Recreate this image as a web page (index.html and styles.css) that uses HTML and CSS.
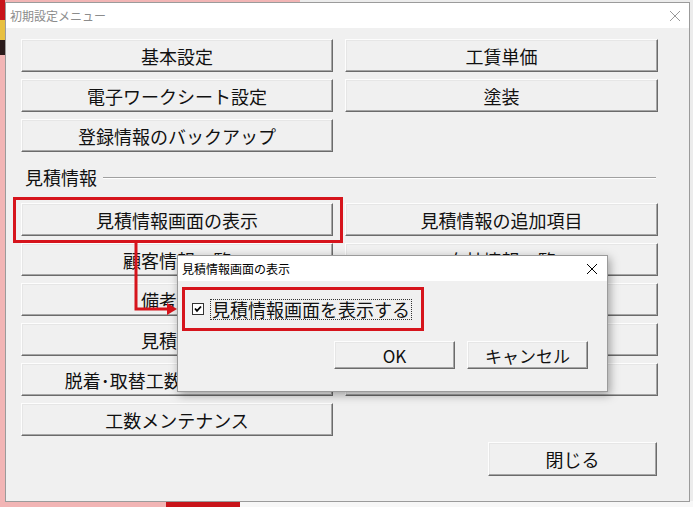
FILE: index.html
```html
<!DOCTYPE html>
<html lang="ja">
<head>
  <meta charset="UTF-8">
  <title>初期設定メニュー</title>
  <link rel="stylesheet" href="styles.css">
</head>
<body>
  <div class="desktop">

    <!-- Main window -->
    <div class="window main-window">
      <div class="titlebar">
        <span class="title">初期設定メニュー</span>
        <svg class="close-x" width="12" height="12" viewBox="0 0 12 12"><path d="M1 1L11 11M11 1L1 11"/></svg>
      </div>
      <div class="window-body">
        <div class="btn-grid">
          <button class="btn">基本設定</button>
          <button class="btn">工賃単価</button>
          <button class="btn">電子ワークシート設定</button>
          <button class="btn">塗装</button>
          <button class="btn">登録情報のバックアップ</button>
        </div>

        <div class="group-label">
          <span>見積情報</span>
          <div class="etched"></div>
        </div>

        <div class="btn-grid">
          <button class="btn">見積情報画面の表示</button>
          <button class="btn">見積情報の追加項目</button>
          <button class="btn">顧客情報一覧</button>
          <button class="btn">自社情報一覧</button>
          <button class="btn">備考一覧</button>
          <button class="btn">見積書式設定</button>
          <button class="btn">見積条件</button>
          <button class="btn">部品価格設定</button>
          <button class="btn">脱着･取替工数メンテナンス</button>
          <button class="btn">作業項目設定</button>
          <button class="btn">工数メンテナンス</button>
        </div>

        <div class="footer">
          <button class="btn close-btn">閉じる</button>
        </div>
      </div>
    </div>

    <!-- Annotations -->
    <div class="highlight hl-button"></div>
    <svg class="arrow" width="693" height="507" viewBox="0 0 693 507">
      <path d="M136 242V309H169" fill="none" stroke="#d6141c" stroke-width="3"/>
      <path d="M167 303L177 309L167 315Z" fill="#d6141c"/>
    </svg>

    <!-- Dialog -->
    <div class="window dialog">
      <div class="titlebar">
        <span class="title">見積情報画面の表示</span>
        <svg class="close-x" width="12" height="12" viewBox="0 0 12 12"><path d="M1 1L11 11M11 1L1 11"/></svg>
      </div>
      <div class="dialog-body">
        <div class="check-row">
          <span class="checkbox">
            <svg width="10" height="10" viewBox="0 0 10 10"><path d="M2 4.5L4 6.8L8 2.5" fill="none" stroke="#000" stroke-width="1.8"/></svg>
          </span>
          <span class="check-label">見積情報画面を表示する</span>
        </div>
        <div class="dialog-buttons">
          <button class="btn small-btn">OK</button>
          <button class="btn small-btn">キャンセル</button>
        </div>
      </div>
    </div>
    <div class="highlight hl-check"></div>

  </div>
</body>
</html>
```

FILE: styles.css
```css
/* General */
body {
  margin: 0;
  padding: 0;
  font-family: "Noto Sans CJK JP", "Noto Sans", sans-serif;
}

.desktop {
  position: relative;
  width: 693px;
  height: 507px;
  overflow: hidden;
  background:
    linear-gradient(to right, #f2b5b5 0 166px, #c8141a 166px 240px, #f7f7f7 240px) 0 100% / 100% 6px no-repeat,
    linear-gradient(to bottom, #c8141a 0 20px, #e8c040 20px 40px, #2a1a1a 40px 55px, transparent 55px) 0 0 / 5px 100% no-repeat,
    linear-gradient(to right, #f2b5b5 0 300px, #ececec 300px);
}

/* Windows */
.window {
  box-sizing: border-box;
  background-color: #f0f0f0;
  border: 1px solid #9b9b9b;
}

.main-window {
  margin: 2px 0 0 5px;
  width: 685px;
  height: 500px;
}

.titlebar {
  height: 25px;
  background-color: #fff;
  display: flex;
  align-items: center;
  justify-content: space-between;
  padding: 0 8px 0 4px;
}

.title {
  font-size: 12px;
  color: #8c8c8c;
}

.close-x path {
  stroke: #9a9a9a;
  stroke-width: 1;
}

.window-body {
  padding: 11px 31px 0 15px;
}

/* Buttons */
.btn-grid {
  display: grid;
  grid-template-columns: 312px 313px;
  column-gap: 12px;
  row-gap: 7px;
}

.btn {
  box-sizing: border-box;
  height: 33px;
  margin: 0;
  padding: 0;
  font-family: inherit;
  font-size: 18px;
  line-height: 1;
  color: #111;
  background-color: #f0f0f0;
  border: 1px solid;
  border-color: #fdfdfd #6b6b6b #6b6b6b #fdfdfd;
  box-shadow: inset -1px -1px 0 #a6a6a6, inset 1px 1px 0 #e6e6e6;
  white-space: nowrap;
  overflow: hidden;
}

.group-label {
  display: flex;
  align-items: center;
  height: 20px;
  margin: 15px 0 16px 4px;
  font-size: 18px;
  color: #111;
}

.group-label span {
  line-height: 1;
}

.etched {
  flex: 1;
  margin: 2px 2px 0 6px;
  border-top: 1px solid #a0a0a0;
  border-bottom: 1px solid #fff;
}

.footer {
  display: flex;
  justify-content: flex-end;
  margin-top: 6px;
  padding-right: 1px;
}

.close-btn {
  width: 169px;
  height: 34px;
}

/* Dialog */
.dialog {
  position: absolute;
  left: 177px;
  top: 255px;
  width: 431px;
  height: 137px;
  box-shadow: 2px 3px 9px rgba(0, 0, 0, 0.35);
}

.dialog .title {
  color: #000;
}

.dialog .titlebar {
  padding-right: 9px;
}

.dialog .close-x path {
  stroke: #000;
}

.dialog-body {
  padding: 18px 19px 0 14px;
}

.check-row {
  display: flex;
  align-items: center;
  height: 20px;
}

.checkbox {
  box-sizing: border-box;
  width: 12px;
  height: 12px;
  border: 1px solid #333;
  background-color: #fff;
  display: flex;
  align-items: center;
  justify-content: center;
}

.check-label {
  margin-left: 7px;
  padding: 0 1px;
  font-size: 18px;
  line-height: 19px;
  color: #111;
  outline: 1px dotted #333;
}

.dialog-buttons {
  display: flex;
  justify-content: flex-end;
  gap: 12px;
  margin-top: 22px;
}

.small-btn {
  width: 121px;
  height: 28px;
  font-size: 17px;
}

/* Red annotations */
.highlight {
  position: absolute;
  box-sizing: border-box;
  border: 3px solid #d6141c;
}

.hl-button {
  left: 13px;
  top: 197px;
  width: 330px;
  height: 46px;
}

.hl-check {
  left: 182px;
  top: 287px;
  width: 242px;
  height: 44px;
}

.arrow {
  position: absolute;
  left: 0;
  top: 0;
}
```
